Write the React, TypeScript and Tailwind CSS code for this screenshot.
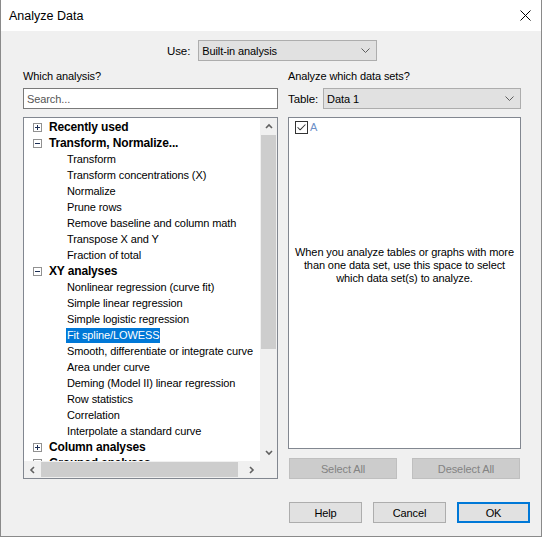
import { Check } from 'lucide-react';

type Group = { label: string; open: boolean; children?: string[] };

const tree: Group[] = [
  { label: 'Recently used', open: false },
  {
    label: 'Transform, Normalize...',
    open: true,
    children: [
      'Transform',
      'Transform concentrations (X)',
      'Normalize',
      'Prune rows',
      'Remove baseline and column math',
      'Transpose X and Y',
      'Fraction of total',
    ],
  },
  {
    label: 'XY analyses',
    open: true,
    children: [
      'Nonlinear regression (curve fit)',
      'Simple linear regression',
      'Simple logistic regression',
      'Fit spline/LOWESS',
      'Smooth, differentiate or integrate curve',
      'Area under curve',
      'Deming (Model II) linear regression',
      'Row statistics',
      'Correlation',
      'Interpolate a standard curve',
    ],
  },
  { label: 'Column analyses', open: false },
  { label: 'Grouped analyses', open: false },
];

const selected = 'Fit spline/LOWESS';

function Expander({ open }: { open: boolean }) {
  return (
    <svg width="9" height="9" viewBox="0 0 9 9" className="shrink-0">
      <rect x="0.5" y="0.5" width="8" height="8" fill="#fff" stroke="#919191" />
      <line x1="2" y1="4.5" x2="7" y2="4.5" stroke="#1c2f55" />
      {!open && <line x1="4.5" y1="2" x2="4.5" y2="7" stroke="#1c2f55" />}
    </svg>
  );
}

function Chevron({ dir }: { dir: 'up' | 'down' | 'left' | 'right' }) {
  const paths = {
    up: 'M1 5 L4 2 L7 5',
    down: 'M1 2 L4 5 L7 2',
    left: 'M5 1 L2 4 L5 7',
    right: 'M2 1 L5 4 L2 7',
  };
  return (
    <svg width="8" height="8" viewBox="0 0 8 8">
      <path d={paths[dir]} fill="none" stroke="#606060" strokeWidth="1.6" />
    </svg>
  );
}

function Select({ value, className = '' }: { value: string; className?: string }) {
  return (
    <div className={`h-[21px] bg-[#e1e1e1] border border-[#adadad] flex items-center justify-between pl-[3px] pr-[6px] ${className}`}>
      <span>{value}</span>
      <svg width="9" height="5" viewBox="0 0 9 5">
        <path d="M0.5 0.5 L4.5 4.5 L8.5 0.5" fill="none" stroke="#5d5d5d" strokeWidth="1" />
      </svg>
    </div>
  );
}

export default function App() {
  return (
    <div className="w-[542px] h-[537px] bg-[#f0f0f0] border-x border-b border-[#8a8a8a] flex flex-col font-['Liberation_Sans',Arial,sans-serif] text-[11px] tracking-[-0.1px] text-black leading-[14px] select-none">
      {/* Title bar */}
      <div className="h-[31px] bg-white flex items-center justify-between pl-[8px] pr-[10px] shrink-0">
        <span className="text-[12.5px] tracking-normal">Analyze Data</span>
        <svg width="11" height="11" viewBox="0 0 11 11">
          <path d="M0.5 0.5 L10.5 10.5 M10.5 0.5 L0.5 10.5" stroke="#000" strokeWidth="1" />
        </svg>
      </div>

      {/* Use row */}
      <div className="flex items-center mt-[9px] pl-[166px] gap-[8px]">
        <span className="text-[11.5px]">Use:</span>
        <Select value="Built-in analysis" className="w-[179px]" />
      </div>

      <div className="flex pl-[22px] gap-[10px] mt-[8px]">
        {/* Left column */}
        <div className="w-[255px] flex flex-col">
          <div className="h-[14px]">Which analysis?</div>
          <div className="mt-[5px] h-[21px] bg-white border border-[#7a7a7a] flex items-center pl-[3px] text-[#555]">
            Search...
          </div>
          <div className="mt-[8px] h-[362px] bg-white border border-[#828790] flex flex-col">
            <div className="flex h-[343px]">
              <div className="flex-1 overflow-hidden pt-[1px]">
                {tree.map((g) => (
                  <div key={g.label}>
                    <div className="h-[16px] flex items-center pl-[9px] gap-[7px] whitespace-nowrap">
                      <Expander open={g.open} />
                      <span className="font-bold text-[12px] tracking-[-0.15px]">{g.label}</span>
                    </div>
                    {g.open &&
                      g.children?.map((c) => (
                        <div key={c} className="h-[16px] flex items-center pl-[42px] whitespace-nowrap">
                          <span
                            className={`px-[1px] h-[15px] flex items-center ${
                              c === selected ? 'bg-[#0078d7] text-white' : ''
                            }`}
                          >
                            {c}
                          </span>
                        </div>
                      ))}
                  </div>
                ))}
              </div>
              {/* Vertical scrollbar */}
              <div className="w-[17px] bg-[#f0f0f0] flex flex-col">
                <div className="h-[17px] flex items-center justify-center">
                  <Chevron dir="up" />
                </div>
                <div className="h-[214px] mx-[1px] bg-[#cdcdcd]" />
                <div className="flex-1" />
                <div className="h-[17px] flex items-center justify-center">
                  <Chevron dir="down" />
                </div>
              </div>
            </div>
            {/* Horizontal scrollbar */}
            <div className="flex h-[17px]">
              <div className="flex-1 bg-[#f0f0f0] flex items-center">
                <div className="w-[17px] flex justify-center">
                  <Chevron dir="left" />
                </div>
                <div className="w-[197px] h-[15px] bg-[#cdcdcd]" />
                <div className="flex-1" />
                <div className="w-[17px] flex justify-center">
                  <Chevron dir="right" />
                </div>
              </div>
              <div className="w-[17px] bg-[#f0f0f0]" />
            </div>
          </div>
        </div>

        {/* Right column */}
        <div className="w-[233px] flex flex-col">
          <div className="h-[14px]">Analyze which data sets?</div>
          <div className="mt-[5px] flex items-center gap-[5px]">
            <span className="text-[11.5px]">Table:</span>
            <Select value="Data 1" className="flex-1" />
          </div>
          <div className="mt-[8px] h-[332px] bg-white border border-[#828790] flex flex-col">
            <div className="flex items-center gap-[2px] pl-[6px] pt-[2px]">
              <div className="w-[13px] h-[13px] border border-[#333] bg-white flex items-center justify-center">
                <Check size={11} strokeWidth={2.2} color="#333" />
              </div>
              <span className="text-[#6d8fc7]">A</span>
            </div>
            <div className="mt-[112px] text-center leading-[13px] px-[2px]">
              When you analyze tables or graphs with more
              <br />
              than one data set, use this space to select
              <br />
              which data set(s) to analyze.
            </div>
          </div>
          <div className="mt-[9px] flex gap-[15px] pl-[1px]">
            <div className="w-[108px] h-[21px] bg-[#cccccc] border border-[#bfbfbf] text-[#838383] flex items-center justify-center">
              Select All
            </div>
            <div className="w-[108px] h-[21px] bg-[#cccccc] border border-[#bfbfbf] text-[#838383] flex items-center justify-center">
              Deselect All
            </div>
          </div>
        </div>
      </div>

      {/* Bottom buttons */}
      <div className="mt-[23px] flex pl-[288px] gap-[11px]">
        <div className="w-[73px] h-[21px] bg-[#e1e1e1] border border-[#adadad] flex items-center justify-center">Help</div>
        <div className="w-[73px] h-[21px] bg-[#e1e1e1] border border-[#adadad] flex items-center justify-center">Cancel</div>
        <div className="w-[73px] h-[21px] bg-[#e1e1e1] border-2 border-[#0078d7] flex items-center justify-center">OK</div>
      </div>
    </div>
  );
}
